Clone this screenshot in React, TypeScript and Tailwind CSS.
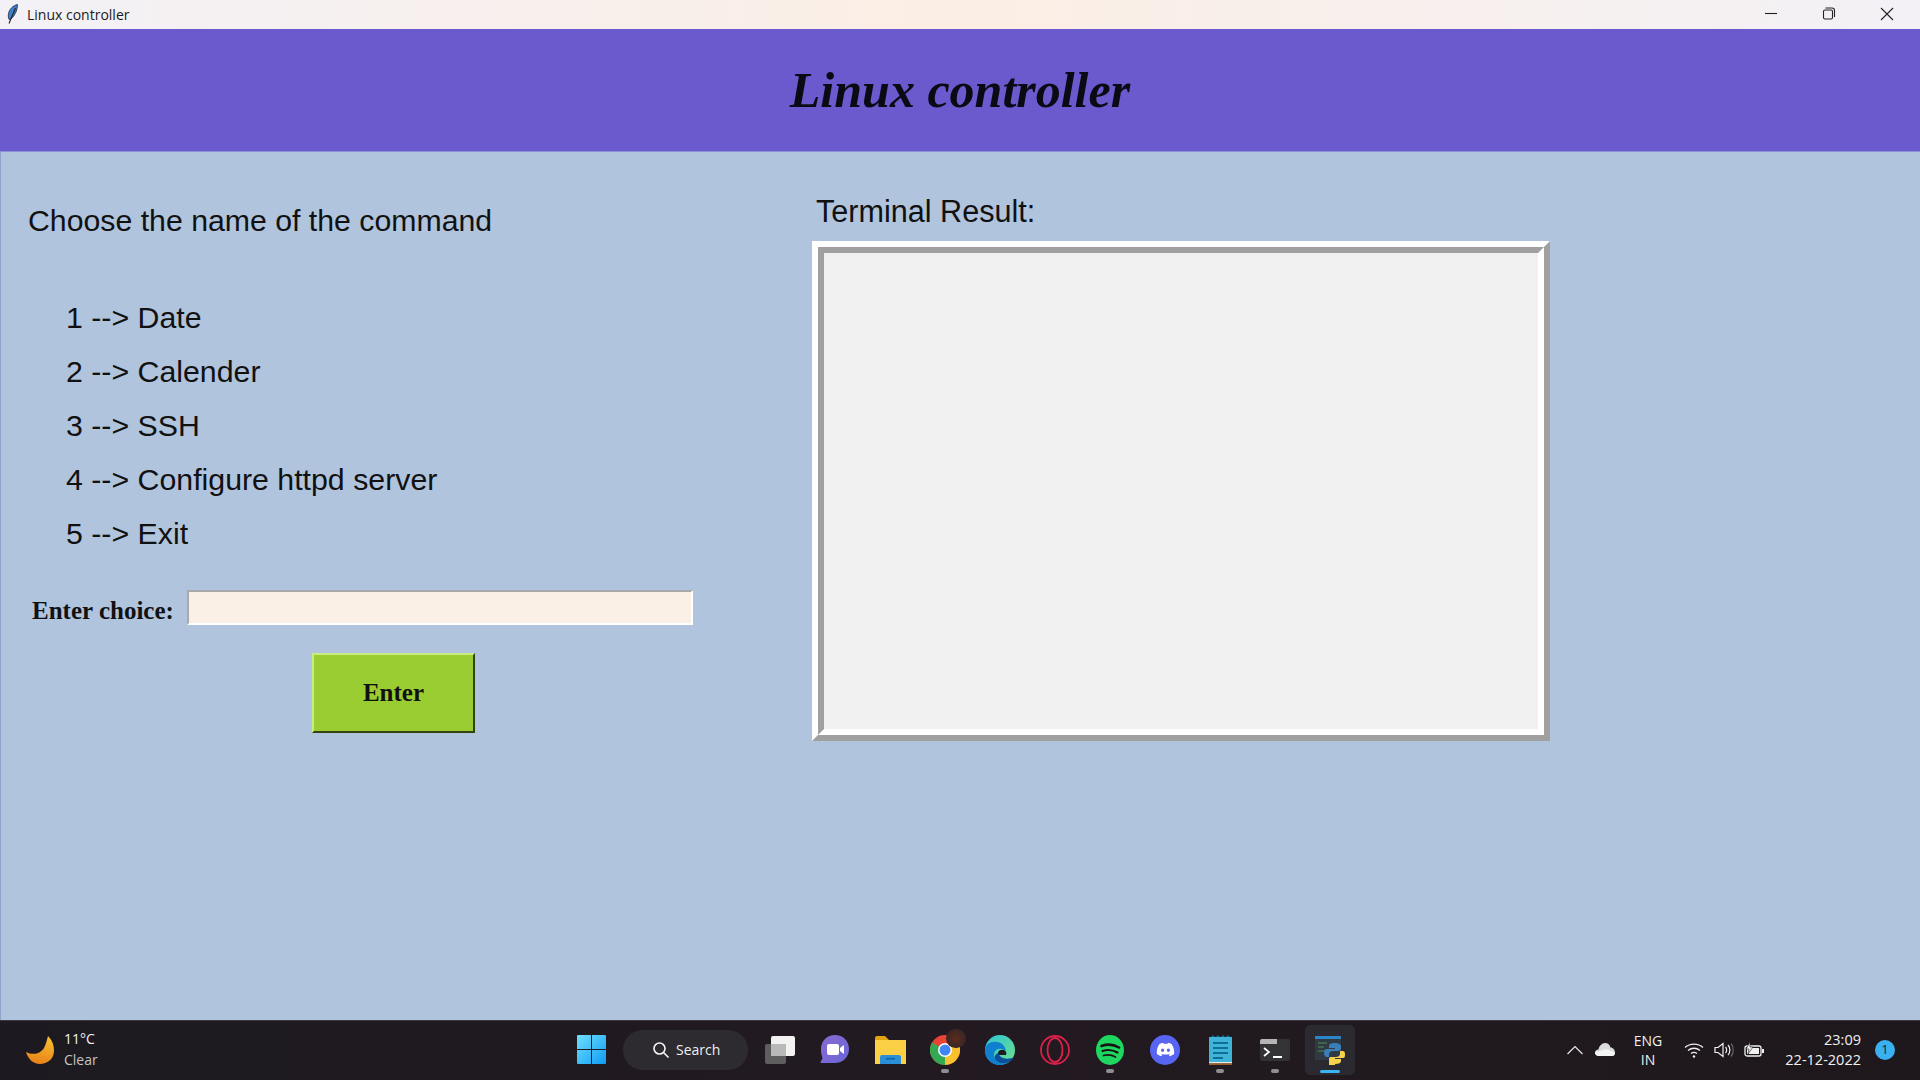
import { FaDiscord } from 'react-icons/fa'

const COMMANDS = ['1 --> Date', '2 --> Calender', '3 --> SSH', '4 --> Configure httpd server', '5 --> Exit']

function Feather() {
  return (
    <svg width="13" height="21" viewBox="0 0 13 21">
      <path d="M11.5 0.5C7 1.5 3.5 5 2.5 9.5C2 12 2.5 14 3 15.5L6 14C9 11 11.5 6 11.5 0.5Z" fill="#3f7fd0" stroke="#1d2a3a" strokeWidth="0.8" />
      <path d="M9.5 4L3 19.5" stroke="#222" strokeWidth="1.1" fill="none" />
    </svg>
  )
}

function TitleBar() {
  return (
    <div className="flex h-[29px] shrink-0 items-center bg-gradient-to-r from-[#f3f1f6] via-[#fbeee4] to-[#f3f1f6] pl-[6px] text-[#1a1a1a]">
      <Feather />
      <span className="ml-[8px] font-['Open_Sans',sans-serif] text-[14px]">Linux controller</span>
      <div className="ml-auto flex items-center">
        <svg width="58" height="29" viewBox="0 0 58 29">
          <path d="M23 13.5H35" stroke="#222" strokeWidth="1.1" />
        </svg>
        <svg width="58" height="29" viewBox="0 0 58 29">
          <path d="M23.5 11.5a1.5 1.5 0 0 1 1.5-1.5h6a1.5 1.5 0 0 1 1.5 1.5v6a1.5 1.5 0 0 1-1.5 1.5h-6a1.5 1.5 0 0 1-1.5-1.5z" fill="none" stroke="#222" strokeWidth="1.1" />
          <path d="M25.5 8h6.5a2.5 2.5 0 0 1 2.5 2.5V17" fill="none" stroke="#222" strokeWidth="1.1" />
        </svg>
        <svg width="58" height="29" viewBox="0 0 58 29" className="mr-[4px]">
          <path d="M23 8L35 20M35 8L23 20" stroke="#222" strokeWidth="1.1" />
        </svg>
      </div>
    </div>
  )
}

function LeftPanel() {
  return (
    <div className="flex w-[811px] shrink-0 flex-col">
      <p className="ml-[27px] mt-[50px] text-[30.25px] leading-[38px]">Choose the name of the command</p>
      <ul className="ml-[65px] mt-[59px] flex flex-col gap-[16px]">
        {COMMANDS.map((c) => (
          <li key={c} className="text-[30.3px] leading-[38px]">
            {c}
          </li>
        ))}
      </ul>
      <div className="ml-[31px] mt-[38px] flex items-start">
        <label className="mt-[2px] w-[155px] font-['Liberation_Serif',serif] text-[25px] font-bold leading-[36px] text-[#111]">Enter choice:</label>
        <input className="mt-[-1px] h-[35px] w-[506px] border-2 border-b-white border-l-[#a9a9a9] border-r-white border-t-[#a9a9a9] bg-[#faf0e6] outline-none" />
      </div>
      <button className="ml-[311px] mt-[24px] h-[80px] w-[163px] border-2 border-b-[#33430f] border-l-[#c8ec80] border-r-[#33430f] border-t-[#c8ec80] bg-[#9acd32] font-['Liberation_Serif',serif] text-[25px] font-bold text-[#111]">
        Enter
      </button>
    </div>
  )
}

function TerminalPanel() {
  return (
    <div className="flex flex-col">
      <p className="ml-[4px] mt-[40px] text-[30.6px] leading-[38px]">Terminal Result:</p>
      <div className="mt-[11px] h-[500px] w-[738px] border-[6px] border-b-[#a0a0a0] border-l-white border-r-[#a0a0a0] border-t-white">
        <div className="h-full w-full border-[6px] border-b-white border-l-[#a0a0a0] border-r-white border-t-[#a0a0a0] bg-[#f0f0f0]" />
      </div>
    </div>
  )
}

function Cell({ children, dot, active }: { children: React.ReactNode; dot?: boolean; active?: boolean }) {
  return (
    <div className={`relative flex h-[50px] w-[50px] items-center justify-center rounded-[5px] ${active ? 'bg-[#2a2a30]' : ''}`}>
      {children}
      {dot && <span className="absolute bottom-[2px] h-[4px] w-[8px] rounded-full bg-[#8e8e92]" />}
      {active && <span className="absolute bottom-[2px] h-[3px] w-[20px] rounded-full bg-[#3cb4f4]" />}
    </div>
  )
}

function Moon() {
  return (
    <svg width="28" height="28" viewBox="0 0 28 28">
      <defs>
        <linearGradient id="moon" x1="0.6" y1="0" x2="0.4" y2="1">
          <stop offset="0" stopColor="#f8c12f" />
          <stop offset="1" stopColor="#e8801a" />
        </linearGradient>
      </defs>
      <path d="M22 0C27 5 28 10 28 15C28 23 21 28 14 28C7 28 2 23 0 16C8 20 15 17 18 12C20 8 21 4 22 0Z" fill="url(#moon)" />
    </svg>
  )
}

function WindowsLogo() {
  return (
    <svg width="29" height="29" viewBox="0 0 29 29">
      <defs>
        <linearGradient id="win" x1="0" y1="0" x2="1" y2="1">
          <stop offset="0" stopColor="#6fe0fb" />
          <stop offset="1" stopColor="#0f9bf5" />
        </linearGradient>
      </defs>
      <path d="M0 1a1 1 0 0 1 1-1h13v14H0zM15 0h13a1 1 0 0 1 1 1v13H15zM0 15h14v14H1a1 1 0 0 1-1-1zM15 15h14v13a1 1 0 0 1-1 1H15z" fill="url(#win)" />
    </svg>
  )
}

function TaskView() {
  return (
    <svg width="30" height="28" viewBox="0 0 30 28">
      <rect x="0" y="8" width="21" height="20" rx="2" fill="#5e5e5e" />
      <rect x="6" y="0" width="24" height="20" rx="2" fill="#f2f2f2" />
      <rect x="6" y="8" width="15" height="12" fill="#b9b9b9" />
    </svg>
  )
}

function Teams() {
  return (
    <svg width="30" height="29" viewBox="0 0 30 29">
      <defs>
        <linearGradient id="teams" x1="0" y1="0" x2="1" y2="1">
          <stop offset="0" stopColor="#8a6ad0" />
          <stop offset="1" stopColor="#6a66d8" />
        </linearGradient>
      </defs>
      <path d="M15 0C23 0 29 6 29 14C29 22 23 28 15 28H1.5C0.5 28 0 27 1 26C2.5 24.5 2.5 23 2 21C1 19 1 16 1 14C1 6 7 0 15 0Z" fill="url(#teams)" />
      <rect x="7" y="9" width="12" height="11" rx="2" fill="#fff" />
      <path d="M20 13L24 10V19L20 16Z" fill="#fff" />
    </svg>
  )
}

function Folder() {
  return (
    <svg width="31" height="28" viewBox="0 0 31 28">
      <path d="M0 2a2 2 0 0 1 2-2h8l4 4h-14z" fill="#e0a40f" />
      <rect x="0" y="4" width="31" height="24" fill="#fbd044" />
      <path d="M5 28v-7a2 2 0 0 1 2-2h17a2 2 0 0 1 2 2v7z" fill="#2a8fd8" />
      <rect x="11" y="22" width="9" height="1.5" fill="#0f5fa8" />
    </svg>
  )
}

function Chrome() {
  return (
    <div className="relative h-[30px] w-[30px]">
      <svg width="30" height="30" viewBox="0 0 30 30">
        <circle cx="15" cy="15" r="15" fill="#ea4335" />
        <path d="M15 15L2 7.5A15 15 0 0 0 15 30Z" fill="#34a853" />
        <path d="M15 15L28 7.5A15 15 0 0 1 15 30Z" fill="#fbc02d" />
        <circle cx="15" cy="15" r="7" fill="#fff" />
        <circle cx="15" cy="15" r="5.5" fill="#4285f4" />
      </svg>
      <span className="absolute right-[-6px] top-[-6px] h-[19px] w-[20px] rounded-full bg-[radial-gradient(circle,#5e2a1c,#2a2528)]" />
    </div>
  )
}

function Edge() {
  return (
    <svg width="30" height="30" viewBox="0 0 30 30">
      <defs>
        <linearGradient id="edgeA" x1="0" y1="0" x2="1" y2="1">
          <stop offset="0" stopColor="#2dc5d5" />
          <stop offset="1" stopColor="#6fe08a" />
        </linearGradient>
      </defs>
      <circle cx="15" cy="15" r="15" fill="url(#edgeA)" />
      <path d="M0 16C0 9 6 6 12 7C19 8 21 14 21 17C21 15 17 13 13 14C9 15 8 20 10 24C12 28 18 30 24 27C20 30 14 31 9 29C4 27 0 22 0 16Z" fill="#0f7fd0" />
      <path d="M10 24C12 28 18 30 24 27C26 26 28 24 29 22C26 24 21 24 18 23C15 22 14 20 14 18C11 18 9 21 10 24Z" fill="#0c4f9f" />
      <path d="M13 18C13 15 17 14 19 15C21 16 22 18 21 20H15C14 20 13 19 13 18Z" fill="#1c1a22" />
    </svg>
  )
}

function Opera() {
  return (
    <svg width="30" height="30" viewBox="0 0 30 30" fill="none" stroke="#d9214a" strokeWidth="1.8">
      <circle cx="15" cy="15" r="14" />
      <ellipse cx="15" cy="15" rx="7.5" ry="12" />
    </svg>
  )
}

function Spotify() {
  return (
    <svg width="28" height="30" viewBox="0 0 28 30" fill="none" stroke="#191414" strokeLinecap="round">
      <ellipse cx="14" cy="15" rx="14" ry="15" fill="#1ed760" stroke="none" />
      <path d="M5.5 11C11 9 18 9.5 23 12.5" strokeWidth="2.6" />
      <path d="M6.5 16C11 14.5 17 15 21.5 17.5" strokeWidth="2.2" />
      <path d="M7.5 20.5C11.5 19.5 16 20 19.5 22" strokeWidth="1.8" />
    </svg>
  )
}

function Discord() {
  return (
    <div className="flex h-[30px] w-[30px] items-center justify-center rounded-full bg-[#5865f2]">
      <FaDiscord className="text-[19px] text-white" />
    </div>
  )
}

function Notepad() {
  return (
    <svg width="23" height="30" viewBox="0 0 23 30">
      <rect x="0" y="2" width="23" height="25" fill="#3fb4d8" />
      <rect x="0" y="27" width="23" height="1.5" fill="#f2e6d6" />
      <rect x="0" y="28.5" width="23" height="1.5" fill="#9a5a28" />
      <path d="M2 2l2-2 2 2zM7 2l2-2 2 2zM12 2l2-2 2 2zM17 2l2-2 2 2z" fill="#0f6e94" />
      <path d="M4 8h15M4 13h15M4 18h15M4 23h10" stroke="#0f6e94" strokeWidth="1.8" />
    </svg>
  )
}

function TerminalIcon() {
  return (
    <svg width="30" height="22" viewBox="0 0 30 22">
      <rect x="0" y="0" width="30" height="22" rx="2" fill="#333336" />
      <path d="M2 0h15v5H0V2a2 2 0 0 1 2-2z" fill="#b5b5b5" />
      <path d="M4 9l5 4-5 4" fill="none" stroke="#fff" strokeWidth="1.7" />
      <path d="M13 18h9" stroke="#fff" strokeWidth="2" />
    </svg>
  )
}

function PythonIde() {
  return (
    <svg width="30" height="30" viewBox="0 0 30 30">
      <rect x="0" y="1" width="26" height="24" fill="#2f3a44" />
      <rect x="0" y="1" width="26" height="3" fill="#2a86c8" />
      <path d="M3 8h9M3 12h6M3 16h8" stroke="#4f8f52" strokeWidth="1.2" />
      <path d="M20 8c-4 0-6 1-6 3v2h6v1h-8c-2 0-3 2-3 4s1 4 3 4h2v-3c0-2 2-3 4-3h5c2 0 3-1 3-3v-2c0-2-3-3-6-3z" fill="#3b7fb8" />
      <path d="M20 29c4 0 6-1 6-3v-2h-6v-1h8c2 0 2-2 2-4s-1-3-2-3h-3v3c0 2-2 3-4 3h-5c-2 0-2 1-2 3v4c0 2 3 3 6 3z" fill="#f6d34a" />
    </svg>
  )
}

function TrayIcons() {
  return (
    <>
      <svg width="16" height="10" viewBox="0 0 16 10" className="ml-[212px]">
        <path d="M0.5 9L8 1.5L15.5 9" fill="none" stroke="#e8e8e8" strokeWidth="1.2" />
      </svg>
      <svg width="20" height="13" viewBox="0 0 20 13" className="ml-[12px]">
        <path d="M4 13C1 13 0 11 0 9.5C0 7.5 2 6.5 3.5 6.5C4 3 7 0 10 0C13 0 15 2 15.5 4.5C18 4.5 20 7 20 9.5C20 12 18.5 13 17 13Z" fill="#dcdcdc" />
        <path d="M0 9.5C0 11 1 13 4 13H17C18.5 13 20 12 20 9.5L11 6Z" fill="#f4f4f4" />
      </svg>
      <div className="ml-[18px] w-[30px] text-center font-['Open_Sans',sans-serif] text-[14px] leading-[19px] text-[#f0f0f0]">
        ENG
        <br />
        IN
      </div>
      <svg width="20" height="16" viewBox="0 0 20 16" fill="none" stroke="#f0f0f0" strokeWidth="1.3" className="ml-[21px]">
        <path d="M1 5.5C6 1 14 1 19 5.5M4 8.5C7.5 5.5 12.5 5.5 16 8.5M7 11.5C9 10 11 10 13 11.5" />
        <circle cx="10" cy="14.5" r="1.2" fill="#f0f0f0" stroke="none" />
      </svg>
      <svg width="20" height="16" viewBox="0 0 20 16" fill="none" stroke="#f0f0f0" strokeWidth="1.2" className="ml-[10px]">
        <path d="M1 5.5H4L9 1.5V14.5L4 10.5H1Z" />
        <path d="M11.5 5C13 6.5 13 9.5 11.5 11M14 3C16.5 5.5 16.5 10.5 14 13" />
        <path d="M17 1.5C20 5 20 11 17 14.5" stroke="#666" />
      </svg>
      <svg width="20" height="16" viewBox="0 0 20 16" className="ml-[10px]">
        <rect x="1" y="4" width="16" height="10" rx="2" fill="none" stroke="#f0f0f0" strokeWidth="1.3" />
        <rect x="3" y="6" width="12" height="6" fill="#f0f0f0" />
        <rect x="18" y="7" width="2" height="4" fill="#f0f0f0" />
        <path d="M6 0L2 7h3l-1 5 5-7H6z" fill="#f0f0f0" stroke="#1c1a20" strokeWidth="0.6" />
      </svg>
      <div className="ml-auto text-right font-['Open_Sans',sans-serif] text-[14.5px] leading-[20px] text-[#f0f0f0]">
        23:09
        <br />
        22-12-2022
      </div>
      <span className="ml-[14px] mr-[25px] flex h-[20px] w-[20px] items-center justify-center rounded-full bg-[#3ab0f0] font-['Open_Sans',sans-serif] text-[12px] text-[#10202c]">
        1
      </span>
    </>
  )
}

function Taskbar() {
  return (
    <div className="flex h-[60px] shrink-0 items-center border-t border-[#3b3b44] bg-gradient-to-r from-[#1c1a20] via-[#221a20] to-[#1e181c] pb-[2px] font-['Open_Sans',sans-serif] text-[#eee]">
      <div className="flex w-[566px] shrink-0 items-center pl-[26px]">
        <Moon />
        <div className="mb-[2px] ml-[10px] text-[14px] leading-[21px]">
          <div className="text-[#f0f0f0]">11°C</div>
          <div className="text-[#c4c4c4]">Clear</div>
        </div>
      </div>
      <Cell>
        <WindowsLogo />
      </Cell>
      <div className="ml-[7px] flex h-[40px] w-[125px] items-center rounded-full bg-[#2d2b30] pl-[29px]">
        <svg width="18" height="18" viewBox="0 0 18 18" fill="none" stroke="#f4f4f4" strokeWidth="1.6">
          <circle cx="7.5" cy="7.5" r="5.5" />
          <path d="M11.5 11.5L16.5 16.5" />
        </svg>
        <span className="ml-[6px] text-[14px] text-[#eee]">Search</span>
      </div>
      <div className="ml-[7px] flex gap-[5px]">
        <Cell><TaskView /></Cell>
        <Cell><Teams /></Cell>
        <Cell><Folder /></Cell>
        <Cell dot><Chrome /></Cell>
        <Cell><Edge /></Cell>
        <Cell><Opera /></Cell>
        <Cell dot><Spotify /></Cell>
        <Cell><Discord /></Cell>
        <Cell dot><Notepad /></Cell>
        <Cell dot><TerminalIcon /></Cell>
        <Cell active><PythonIde /></Cell>
      </div>
      <div className="flex flex-1 items-center">
        <TrayIcons />
      </div>
    </div>
  )
}

export default function App() {
  return (
    <div className="flex h-[1080px] w-[1920px] flex-col overflow-hidden font-['Liberation_Sans',sans-serif] text-[#111]">
      <TitleBar />
      <header className="flex h-[123px] shrink-0 items-center justify-center border-b border-[#8a8fd8] bg-[#6a5acd] pt-[1px]">
        <h1 className="font-['Liberation_Serif',serif] text-[50px] font-bold italic text-[#0a0a14]">Linux controller</h1>
      </header>
      <main className="flex flex-1 border-l border-[#8fa3c8] bg-[#b0c4de]">
        <LeftPanel />
        <TerminalPanel />
      </main>
      <Taskbar />
    </div>
  )
}
